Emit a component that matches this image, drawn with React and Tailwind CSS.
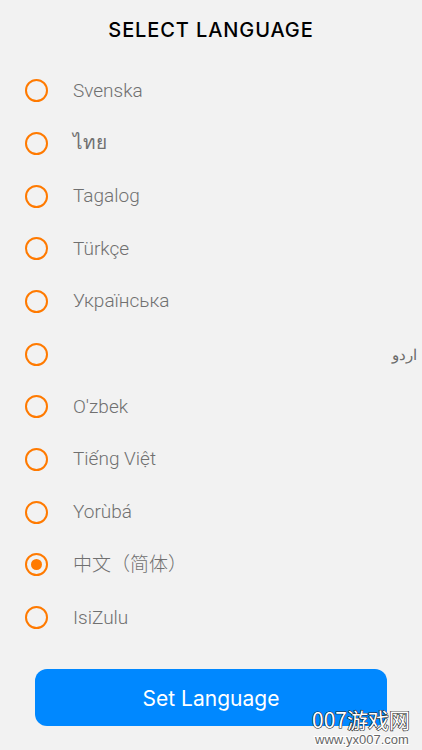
import React from "react";

const langs = [
  "Svenska",
  "ไทย",
  "Tagalog",
  "Türkçe",
  "Українська",
  "اردو",
  "O'zbek",
  "Tiếng Việt",
  "Yorùbá",
  "中文（简体）",
  "IsiZulu",
];

export default function App() {
  return (
    <div className="relative w-[422px] h-[750px] bg-[#f2f2f2] overflow-hidden">
      <div className="h-[64.3px] pt-[18px] text-center text-[20px] leading-[24px] tracking-[0.9px] text-black font-medium [font-family:Inter,'Liberation_Sans',sans-serif]">
        SELECT LANGUAGE
      </div>
      <div className="flex flex-col">
        {langs.map((l, i) => {
          const selected = i === 9;
          const rtl = i === 5;
          return (
            <div key={l} className="h-[52.7px] flex items-center pl-[25px]">
              <div className="w-[23px] h-[23px] rounded-full border-[2.5px] border-[#ff7a00] flex items-center justify-center shrink-0">
                {selected && <div className="w-[11px] h-[11px] rounded-full bg-[#ff7a00]" />}
              </div>
              {rtl ? (
                <div className="flex-1 text-right pr-[5px] text-[15px] leading-[20px] text-[#6b6b6b] font-light [font-family:'Noto_Sans','DejaVu_Sans',sans-serif]">
                  {l}
                </div>
              ) : (
                <div className="ml-[25px] text-[19px] leading-[24px] text-[#707070] font-light [font-family:Roboto,'Noto_Sans','Noto_Sans_CJK_SC',sans-serif]">
                  {l}
                </div>
              )}
            </div>
          );
        })}
      </div>
      <div className="mt-[25px] mx-[35px] h-[57px] rounded-[12px] bg-[#0088ff] flex items-center justify-center pt-[2px] text-white text-[21px] [font-family:Inter,'Liberation_Sans',sans-serif]">
        Set Language
      </div>
      <div className="absolute left-[312px] top-[705px] flex flex-col items-start pointer-events-none whitespace-nowrap">
        <div className="text-[21px] leading-[28px] text-white [font-family:'Noto_Sans_CJK_SC',sans-serif] [-webkit-text-stroke:1.2px_#222] [paint-order:stroke_fill]">
          007游戏网
        </div>
        <div className="text-[13px] leading-[14px] ml-[3px] text-[#666] [font-family:'Liberation_Sans',sans-serif] [-webkit-text-stroke:2px_#fff] [paint-order:stroke_fill]">
          www.yx007.com
        </div>
      </div>
    </div>
  );
}
